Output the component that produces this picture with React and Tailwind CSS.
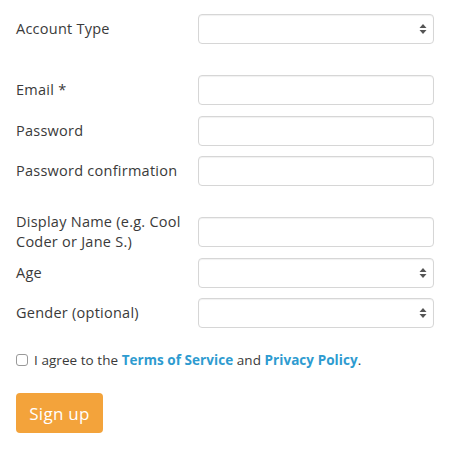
import React from 'react'

const Arrows = () => (
  <svg className="absolute right-[6px] top-1/2 -translate-y-1/2" width="8" height="12" viewBox="0 0 8 12">
    <path d="M4 1 L7.5 5 L0.5 5 Z" fill="#555" />
    <path d="M4 11 L7.5 7 L0.5 7 Z" fill="#555" />
  </svg>
)

const Field = ({ label, select }) => (
  <div className="flex items-center h-[30px]">
    <label className="w-[182px] shrink-0 pr-1 text-[14.5px] tracking-[0.25px] leading-[20px] text-[#3a3a3a]">{label}</label>
    <div className="relative w-[236px] h-[30px] rounded-[4px] border border-[#d6d6d6] bg-white shadow-[inset_0_1px_1px_rgba(0,0,0,0.06)]">
      {select && <Arrows />}
    </div>
  </div>
)

const App = () => {
  return (
    <div className="w-[451px] h-[454px] bg-white pl-[16px] pt-[14px]" style={{ fontFamily: '"Open Sans", sans-serif' }}>
      <div className="flex flex-col gap-[10.5px]">
        <Field label="Account Type" select />
      </div>

      <div className="flex flex-col gap-[10.5px] mt-[31px]">
        <Field label="Email *" />
        <Field label="Password" />
        <Field label="Password confirmation" />
      </div>

      <div className="flex flex-col gap-[10.5px] mt-[31px]">
        <Field label="Display Name (e.g. Cool Coder or Jane S.)" />
        <Field label="Age" select />
        <Field label="Gender (optional)" select />
      </div>

      {/* terms */}
      <div className="flex items-center mt-[22px] text-[13.5px] tracking-[0.05px] text-[#3a3a3a]">
        <span className="w-[12px] h-[12px] rounded-[3px] border border-[#999] bg-white mr-[6px]"></span>
        <span>
          I agree to the <a href="#" className="font-bold text-[#2e9bd0]">Terms of Service</a> and{' '}
          <a href="#" className="font-bold text-[#2e9bd0]">Privacy Policy</a>.
        </span>
      </div>

      <button className="mt-[23px] w-[87px] h-[40px] rounded-[4px] bg-[#f3a33b] text-white text-[17px] tracking-[0.3px]">
        Sign up
      </button>
    </div>
  )
}

export default App
